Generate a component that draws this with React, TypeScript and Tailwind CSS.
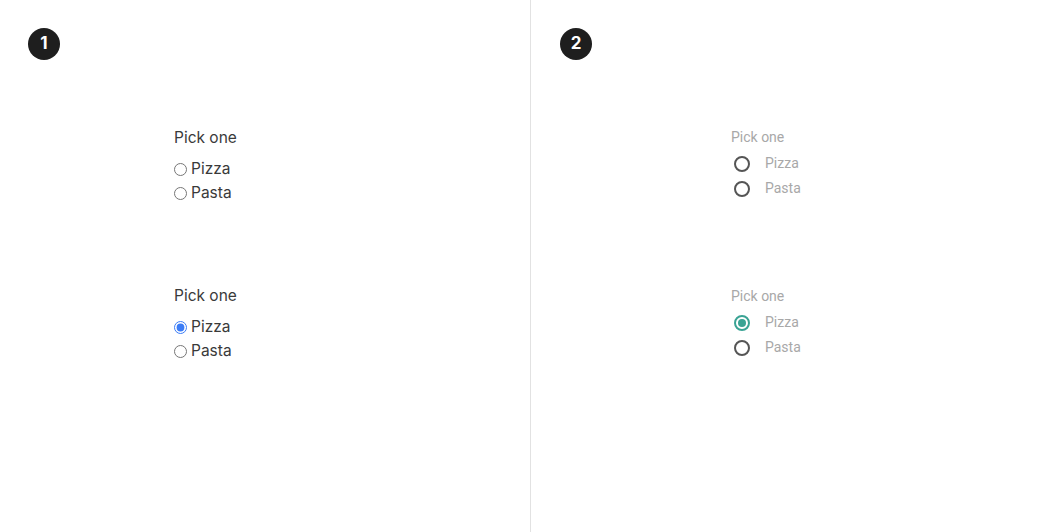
import React, { useState } from 'react';

const Badge = ({ n }: { n: number }) => (
  <div className="w-8 h-8 rounded-full bg-[#1e1e1e] text-white flex items-center justify-center text-[17px] font-bold font-['Inter',sans-serif]">
    {n}
  </div>
);

const NativeGroup = ({ initial }: { initial?: string }) => {
  const [value, setValue] = useState(initial);
  return (
    <div className="font-['Inter',sans-serif] text-[#3a3a3a]">
      <div className="text-[15.5px] leading-6">Pick one</div>
      <div className="mt-[7px] flex flex-col">
        {['Pizza', 'Pasta'].map((opt) => (
          <label key={opt} className="h-6 flex items-center text-[15.5px] gap-[4px]">
            <input
              type="radio"
              checked={value === opt}
              onChange={() => setValue(opt)}
              className="m-0 w-[13px] h-[13px] accent-[#3b7cf6]"
            />
            {opt}
          </label>
        ))}
      </div>
    </div>
  );
};

const MaterialGroup = ({ initial }: { initial?: string }) => {
  const [value, setValue] = useState(initial);
  return (
    <div className="font-['Roboto',sans-serif]">
      <div className="text-[14px] leading-5 text-[#a8a8a8]">Pick one</div>
      <div className="mt-[4px] flex flex-col">
        {['Pizza', 'Pasta'].map((opt) => {
          const on = value === opt;
          return (
            <button
              key={opt}
              onClick={() => setValue(opt)}
              className="h-[25px] pl-[3px] flex items-center gap-[15px] text-[14px] text-[#a8a8a8]"
            >
              <span
                className={`w-4 h-4 rounded-full border-2 flex items-center justify-center ${
                  on ? 'border-[#3aa394]' : 'border-[#555555]'
                }`}
              >
                {on && <span className="w-2 h-2 rounded-full bg-[#3aa394]" />}
              </span>
              {opt}
            </button>
          );
        })}
      </div>
    </div>
  );
};

export default function App() {
  return (
    <div className="w-[1064px] h-[532px] bg-white flex">
      <div className="w-[531px] border-r border-[#e2e2e2] pt-7 pl-7">
        <Badge n={1} />
        <div className="ml-[146px] mt-[66px]">
          <NativeGroup />
          <div className="mt-[79px]">
            <NativeGroup initial="Pizza" />
          </div>
        </div>
      </div>
      <div className="flex-1 pt-7 pl-[29px]">
        <Badge n={2} />
        <div className="ml-[171px] mt-[67px]">
          <MaterialGroup />
          <div className="mt-[85px]">
            <MaterialGroup initial="Pizza" />
          </div>
        </div>
      </div>
    </div>
  );
}
